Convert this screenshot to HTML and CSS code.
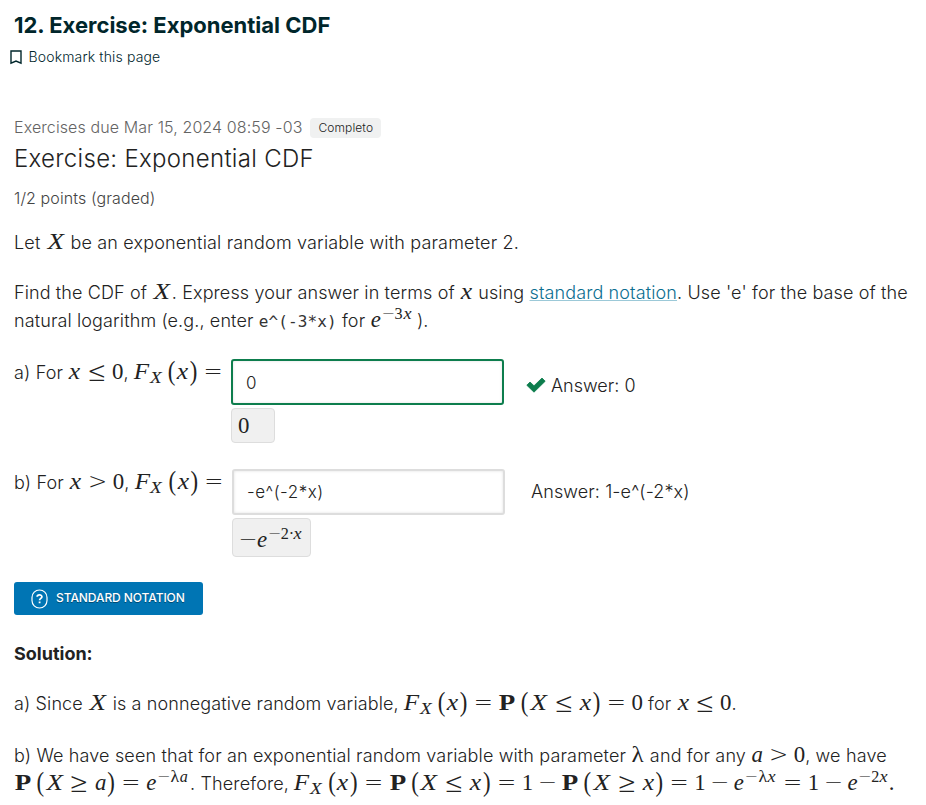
FILE: index.html
```html
<!DOCTYPE html>
<html lang="en">
<head>
<meta charset="utf-8">
<title>Exercise: Exponential CDF</title>
<link rel="stylesheet" href="styles.css">
</head>
<body>
<main class="unit">
<h1 class="unit-title">12. Exercise: Exponential CDF</h1>
<div class="bookmark"><svg class="bookmark-icon" width="12" height="15" viewBox="0 0 12 15"><path d="M1 1H11V13.2L6 11L1 13.2Z" fill="none" stroke="#00262b" stroke-width="1.4"/></svg><span>Bookmark this page</span></div>
<div class="due"><span class="due-text">Exercises due Mar 15, 2024 08:59 -03</span><span class="badge">Completo</span></div>
<h2 class="problem-title">Exercise: Exponential CDF</h2>
<div class="points">1/2 points (graded)</div>

<p class="para intro"><span class="line"><span class="t t1">Let </span><span class="m"><i class="X">X</i></span><span class="t t2"> be an exponential random variable with parameter 2.</span></span></p>
<p class="para find"><span class="line"><span class="t">Find the CDF of </span><span class="m"><i class="X">X</i></span><span class="t">. Express your answer in terms of </span><span class="m"><i class="x">x</i></span><span class="t"> using <a class="link">standard notation</a>. Use 'e' for the base of the</span></span>
<span class="line"><span class="t">natural logarithm (e.g., enter <code>e^(-3*x)</code> for </span><span class="m"><i class="e">e</i><span class="sup"><b class="bin0">−</b><b class="n">3</b><i class="x">x</i></span></span><span class="t"> ).</span></span></p>

<div class="question qa">
<div class="label"><span class="t">a) For </span><span class="m"><i class="x">x</i><b class="rel le">≤</b><b class="n">0</b></span><span class="t">, </span><span class="m"><i class="F">F</i><span class="sub"><i class="X">X</i></span><b class="p open">(</b><i class="x">x</i><b class="p">)</b><b class="rel">=</b></span></div>
<div class="entry"><div class="field correct">0</div><div class="preview zero"><span class="m"><b class="n">0</b></span></div></div>
<div class="answer"><svg class="check" width="20" height="16" viewBox="0 0 20 16"><path d="M0.8 8.2L4 5L8 8.8L16 1L19.2 4.2L8 15.2Z" fill="#0d7d4d" stroke="#0d7d4d" stroke-width=".8" stroke-linejoin="round"/></svg><span>Answer: 0</span></div>
</div>
<div class="question qb">
<div class="label"><span class="t">b) For </span><span class="m"><i class="x">x</i><b class="rel">&gt;</b><b class="n">0</b></span><span class="t">, </span><span class="m"><i class="F">F</i><span class="sub"><i class="X">X</i></span><b class="p open">(</b><i class="x">x</i><b class="p">)</b><b class="rel">=</b></span></div>
<div class="entry"><div class="field">-e^(-2*x)</div><div class="preview"><span class="m"><b class="bin0">−</b><i class="e">e</i><span class="sup"><b class="bin0">−</b><b class="n">2</b><b class="dot">·</b><i class="x">x</i></span></span></div></div>
<div class="answer"><span>Answer: 1-e^(-2*x)</span></div>
</div>

<button class="notation"><svg width="18" height="20" viewBox="0 0 18 20"><rect x="1" y="1" width="15" height="18" rx="7.5" fill="none" stroke="#fff" stroke-width="1.2"/><path d="M6.2 7.8C6.2 5.4 10.9 5.2 10.9 7.8C10.9 9.4 8.6 9.4 8.6 11.2M8.6 12.6V14.3" fill="none" stroke="#fff" stroke-width="1.8"/></svg><span>STANDARD NOTATION</span></button>

<h3 class="solution">Solution:</h3>
<p class="para sol-a"><span class="line"><span class="t">a) Since </span><span class="m"><i class="X">X</i></span><span class="t"> is a nonnegative random variable, </span><span class="m"><i class="F">F</i><span class="sub"><i class="X">X</i></span><b class="p open">(</b><i class="x">x</i><b class="p">)</b><b class="rel">=</b><b class="P">P</b><b class="p open">(</b><i class="X">X</i><b class="rel le">≤</b><i class="x">x</i><b class="p">)</b><b class="rel">=</b><b class="n">0</b></span><span class="t"> for </span><span class="m"><i class="x">x</i><b class="rel le">≤</b><b class="n">0</b></span><span class="t">.</span></span></p>
<p class="para sol-b"><span class="line"><span class="t">b) We have seen that for an exponential random variable with parameter </span><span class="m"><b class="lam">λ</b></span><span class="t"> and for any </span><span class="m"><i class="a">a</i><b class="rel">&gt;</b><b class="n">0</b></span><span class="t">, we have</span></span>
<span class="line"><span class="m"><b class="P">P</b><b class="p open">(</b><i class="X">X</i><b class="rel le">≥</b><i class="a">a</i><b class="p">)</b><b class="rel">=</b><i class="e">e</i><span class="sup"><b class="bin0">−</b><b class="lam">λ</b><i class="a">a</i></span></span><span class="t therefore">. Therefore, </span><span class="m"><i class="F">F</i><span class="sub"><i class="X">X</i></span><b class="p open">(</b><i class="x">x</i><b class="p">)</b><b class="rel">=</b><b class="P">P</b><b class="p open">(</b><i class="X">X</i><b class="rel le">≤</b><i class="x">x</i><b class="p">)</b><b class="rel">=</b><b class="n">1</b><b class="bin">−</b><b class="P">P</b><b class="p open">(</b><i class="X">X</i><b class="rel le">≥</b><i class="x">x</i><b class="p">)</b><b class="rel">=</b><b class="n">1</b><b class="bin">−</b><i class="e">e</i><span class="sup"><b class="bin0">−</b><b class="lam">λ</b><i class="x">x</i></span><b class="rel aftersup">=</b><b class="n">1</b><b class="bin">−</b><i class="e">e</i><span class="sup"><b class="bin0">−</b><b class="n">2</b><i class="x">x</i></span><b class="stop">.</b></span></span></p>
</main>
</body>
</html>
```
FILE: styles.css
```css
* { box-sizing: border-box; }
body { margin: 0; background: #fff; color: #222; font-family: Inter, sans-serif; font-size: 18px; font-weight: 350; line-height: 28px; overflow: hidden; }
.unit { height: 805px; padding: 11px 14px 0; }
h1, h2, h3, p { margin: 0; }
.unit-title { font-size: 22px; line-height: 28px; font-weight: 700; color: #00262b; white-space: nowrap; }
.bookmark { display: flex; align-items: center; height: 24px; margin: 6px 0 0 -4px; font-size: 14px; color: #00262b; letter-spacing: .15px; }
.bookmark-icon { margin: 1px 6.5px 0 0; }
.due { display: flex; align-items: center; height: 22px; margin-top: 47px; }
.due-text { font-size: 16px; color: #646464; white-space: nowrap; letter-spacing: .11px; }
.badge { margin-left: 8px; height: 20px; padding: 0 8px; border-radius: 4px; background: #f0f1f1; font-size: 12px; line-height: 19px; color: #222; letter-spacing: .1px; margin-top: 2px; }
.problem-title { margin-top: 5px; font-size: 24px; line-height: 32px; font-weight: 300; letter-spacing: .3px; color: #222; }
.points { height: 24px; margin-top: 11px; font-size: 16px; line-height: 24px; color: #444; letter-spacing: .1px; }
.line { display: block; height: 28px; white-space: nowrap; }
.t { white-space: pre; letter-spacing: .165px; }
.find .t { letter-spacing: .118px; }
.sol-a .t { letter-spacing: .12px; }
.sol-b .t { letter-spacing: .145px; }
.intro { margin-top: 19px; }
.find { margin-top: 22px; }
.link { color: #0b6e91; text-decoration: underline; text-decoration-color: #9cc9d8; text-decoration-thickness: 1px; text-underline-offset: 1px; text-decoration-skip-ink: none; }
code { font-family: "DejaVu Sans Mono", monospace; font-size: 16px; color: #333; }

.m { display: inline-flex; align-items: baseline; font-family: "Liberation Serif", serif; font-size: 22.86px; line-height: 0; color: #222; }
.m b, .m i { display: inline-block; flex: none; text-align: center; font-weight: 400; }
.m .X { width: .852em; transform: scaleX(1.18); }
.m .x { width: .572em; transform: scaleX(1.12); }
.m .e { width: .466em; }
.m .a { width: .529em; }
.m .n { width: .5em; }
.m .F { width: .65em; transform: scaleX(1.1); }
.m .P { width: .786em; font-weight: 700; transform: scaleX(1.18); }
.m .lam { width: .583em; transform: scaleX(1.1); }
.m .p { width: .389em; transform: scaleY(1.15); }
.m .open { margin-left: .167em; }
.m .rel, .m .bin, .m .bin0 { display: inline-flex; justify-content: center; font-family: "DejaVu Sans Light", "DejaVu Sans", sans-serif; font-weight: 200; width: .778em; }
.m .rel { margin: 0 .278em; }
.m .le { font-family: Inter, sans-serif; font-weight: 200; transform: scale(1.5, 1.35); }
.m .bin { margin: 0 .222em; }
.m .dot { width: .278em; }
.m .stop { width: .278em; }
.m .aftersup { margin-left: .33em; }
.sup, .sub { display: inline-flex; align-items: baseline; font-size: .707em; position: relative; }
.sup { top: -.52em; margin-left: .05em; }
.sub { top: .22em; margin-right: .05em; }
.therefore { margin-left: 2px; }

.question { display: flex; align-items: flex-start; }
.qa { height: 110px; margin-top: 24px; }
.qb { height: 113px; }
.label { width: 217px; white-space: nowrap; }
.label .m:last-child { margin-left: -1px; }
.label .F { margin-left: 1px; }
.qb .label { width: 218px; }
.field { width: 273px; height: 46px; border: 2px solid #ddd; border-radius: 3px; padding: 0 13px; font-size: 17px; line-height: 42px; box-shadow: inset 0 0 3px rgba(0,0,0,.12); letter-spacing: .5px; }
.correct { border-color: #0d7d4d; line-height: 44px; }
.preview { display: inline-flex; height: 39px; margin-top: 3px; padding: 20px 7px 0 6px; background: #f0f0f0; border: 1px solid #ddd; border-radius: 4px; vertical-align: top; line-height: 0; }
.zero { width: 44px; height: 35px; padding: 17px 6px 0; }
.answer { display: flex; align-items: center; height: 28px; margin: 13px 0 0 22px; }
.qb .answer { margin: 9px 0 0 26px; letter-spacing: .1px; }
.check { margin: -2px 5px 0 0; }
.notation { display: flex; align-items: center; width: 189px; height: 33px; padding: 0 0 0 17px; border: 0; border-radius: 3px; background: #0075b4; color: #fff; font-family: Inter, sans-serif; font-size: 12px; font-weight: 450; text-shadow: 0 1px 0 #004b73; white-space: nowrap; }
.notation svg { margin-right: 7px; }
.notation span { margin-top: -2px; letter-spacing: -.08px; }
.solution { margin-top: 25px; font-size: 18px; line-height: 28px; font-weight: 700; }
.sol-a { margin-top: 22px; }
.sol-b { margin-top: 24px; }
```
